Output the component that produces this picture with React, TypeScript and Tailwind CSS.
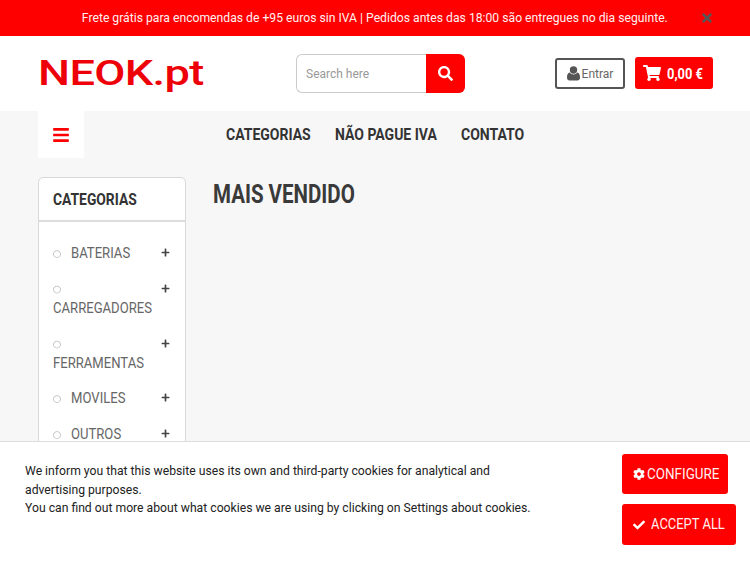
import React from "react";
import { FaBars, FaCheck, FaCog, FaPlus, FaRegCircle, FaSearch, FaShoppingCart, FaTimes } from "react-icons/fa";

function Cond({ w, className, children }: { w: string; className: string; children: React.ReactNode }) {
  return (
    <span className={`${w} block`}>
      <span className={`${className} block origin-left whitespace-nowrap font-bold`}>{children}</span>
    </span>
  );
}

function Label({ children }: { children: React.ReactNode }) {
  return <span className="block origin-left scale-x-[0.935] whitespace-nowrap">{children}</span>;
}

function Row({ label, wrap, h }: { label: string; wrap?: boolean; h: string }) {
  return (
    <li className={`relative text-[14px] leading-[19px] text-[#666] ${h}`}>
      <FaPlus className="absolute right-[15px] top-[4px] text-[9px] text-[#444]" />
      {wrap ? (
        <div>
          <FaRegCircle className="h-[19px] text-[8px] text-[#bbb]" />
          <Label>{label}</Label>
        </div>
      ) : (
        <div className="flex items-center">
          <FaRegCircle className="mr-[10px] mt-[1px] text-[8px] text-[#bbb]" />
          <Label>{label}</Label>
        </div>
      )}
    </li>
  );
}

function UserIcon() {
  return (
    <svg width="13" height="15" viewBox="0 0 13 15" className="shrink-0 fill-[#555]">
      <circle cx="6.5" cy="4" r="3.7" />
      <path d="M2.6 6.6C3.6 7.9 5 8.6 6.5 8.6S9.4 7.9 10.4 6.6C12 7 13 8.6 13 11.6 13 13.6 12 14.6 10.4 14.6H2.6C1 14.6 0 13.6 0 11.6 0 8.6 1 7 2.6 6.6Z" />
    </svg>
  );
}

export default function App() {
  return (
    <div className="relative h-[563px] w-[750px] overflow-hidden bg-[#f7f7f7] font-['Roboto',sans-serif]">
      <div className="relative flex h-[36px] items-center justify-center overflow-hidden bg-[#ff0000] pb-[1px] text-[13px] text-[#fff0f0]">
        <span className="scale-x-[0.9365] whitespace-nowrap">
          Frete grátis para encomendas de +95 euros sin IVA | Pedidos antes das 18:00 são entregues no dia seguinte.
        </span>
        <FaTimes className="absolute left-[700px] top-[11px] text-[14px] text-[#555]" />
      </div>

      <header className="flex h-[75px] items-center bg-white pl-[38px]">
        <div className="w-[258px]">
          <span className="block origin-left scale-x-[1.29] whitespace-nowrap text-[35px] leading-[36px] font-medium tracking-[-0.5px] text-[#ee0008]">
            NEOK.pt
          </span>
        </div>
        <div className="flex h-[39px] w-[169px]">
          <div className="flex w-[130px] items-center rounded-l-[6px] border border-r-0 border-[#ccc] bg-white pl-[9px] text-[12px] text-[#999]">
            Search here
          </div>
          <div className="flex w-[39px] items-center justify-center rounded-r-[6px] bg-[#ff0000] text-[15px] text-white">
            <FaSearch />
          </div>
        </div>
        <div className="ml-[90px] flex h-[31px] w-[70px] items-center justify-center gap-[2px] rounded-[3px] border-2 border-[#555] text-[12px] text-[#666]">
          <UserIcon />
          <span>Entrar</span>
        </div>
        <div className="-mt-[1px] ml-[10px] flex h-[32px] w-[78px] items-center rounded-[3px] bg-[#ff0000] pl-[8px] text-white">
          <FaShoppingCart className="text-[18px]" />
          <span className="ml-[6px] mt-[2px]">
            <Cond w="w-[37px]" className="scale-x-[0.86] text-[15px]">0,00 €</Cond>
          </span>
        </div>
      </header>

      <nav className="flex h-[47px] pl-[38px]">
        <div className="flex h-[47px] w-[46px] items-center justify-center bg-white text-[#ff0000]">
          <FaBars className="text-[18px]" />
        </div>
        <div className="ml-[142px] flex items-center text-[#333]">
          <Cond w="w-[109px]" className="scale-x-[0.875] text-[16px]">CATEGORIAS</Cond>
          <Cond w="w-[126px]" className="scale-x-[0.875] text-[16px]">NÃO PAGUE IVA</Cond>
          <Cond w="w-[70px]" className="scale-x-[0.875] text-[16px]">CONTATO</Cond>
        </div>
      </nav>

      <main className="flex items-start pl-[38px] pt-[19px]">
        <aside className="h-[400px] w-[148px] rounded-[5px] border border-[#d8d8d8] bg-white">
          <div className="flex h-[44px] items-center border-b-2 border-[#ddd] pl-[14px] pt-[1px] text-[#333]">
            <Cond w="w-[90px]" className="scale-x-[0.865] text-[16px]">CATEGORIAS</Cond>
          </div>
          <ul className="pl-[14px] pt-[22px]">
            <Row label="BATERIAS" h="h-[36px]" />
            <Row label="CARREGADORES" wrap h="h-[55px]" />
            <Row label="FERRAMENTAS" wrap h="h-[54px]" />
            <Row label="MOVILES" h="h-[36px]" />
            <Row label="OUTROS" h="h-[36px]" />
          </ul>
        </aside>
        <h1 className="ml-[27px] mt-[3px] text-[#3a3a3a]">
          <Cond w="w-[145px]" className="scale-x-[0.82] text-[25px] leading-[30px]">MAIS VENDIDO</Cond>
        </h1>
      </main>

      <section className="absolute inset-x-0 bottom-0 flex h-[122px] border-t border-[#ddd] bg-white pl-[25px]">
        <div className="mt-[20px] w-[510px]">
          <p className="w-[544px] origin-left scale-x-[0.9375] text-[13px] leading-[18.5px] text-[#222]">
            We inform you that this website uses its own and third-party cookies for analytical and advertising purposes.
            <br />
            You can find out more about what cookies we are using by clicking on Settings about cookies.
          </p>
        </div>
        <div className="ml-[87px] mt-[12px] flex flex-col items-start gap-[10px]">
          <button className="flex h-[40px] w-[106px] items-center rounded-[3px] bg-[#ff0000] pl-[11px] text-[14px] text-[#fff0f0]">
            <FaCog className="mr-[2px] text-[12px] text-white" />
            <span className="block origin-left scale-x-[0.96] whitespace-nowrap">CONFIGURE</span>
          </button>
          <button className="flex h-[41px] w-[114px] items-center rounded-[3px] bg-[#ff0000] pl-[11px] text-[14px] text-[#fff0f0]">
            <FaCheck className="mr-[6px] text-[12px] text-white" />
            <span className="block origin-left scale-x-[0.925] whitespace-nowrap">ACCEPT ALL</span>
          </button>
        </div>
      </section>
    </div>
  );
}
